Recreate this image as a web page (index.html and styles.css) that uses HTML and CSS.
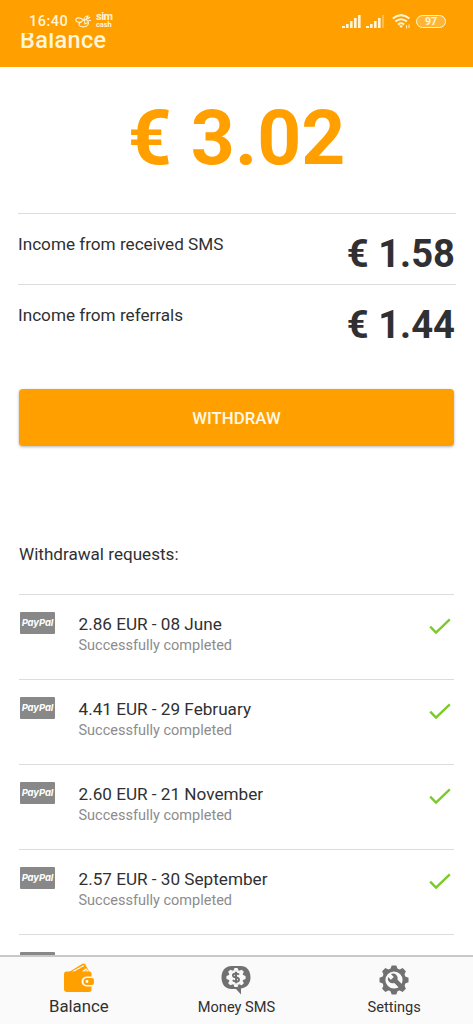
FILE: index.html
```html
<!DOCTYPE html>
<html lang="en">
<head>
<meta charset="utf-8">
<meta name="viewport" content="width=device-width">
<title>Balance</title>
<link rel="stylesheet" href="styles.css">
</head>
<body>
<svg class="defs" width="0" height="0">
  <defs>
    <symbol id="check" viewBox="0 0 22 18"><path d="M1.200 8.700l5.800 5.800L20.800 1.300" fill="none" stroke="#7acb27" stroke-width="2.400"/></symbol>
    <g id="teeth">
      <path id="tooth" d="M-3.800-10.500L-2.300-14.500H2.300L3.800-10.500z"/>
      <use href="#tooth" transform="rotate(45)"/><use href="#tooth" transform="rotate(90)"/><use href="#tooth" transform="rotate(135)"/><use href="#tooth" transform="rotate(180)"/><use href="#tooth" transform="rotate(225)"/><use href="#tooth" transform="rotate(270)"/><use href="#tooth" transform="rotate(315)"/>
    </g>
  </defs>
</svg>
<div class="app">
  <header class="header">
    <div class="status">
      <span class="time">16:40</span>
      <svg class="bee" width="16" height="13" viewBox="0 0 16 13" fill="none" stroke="#fff5d8" stroke-width="1.100"><path d="M8.500 5C6 2.500 1 2 .8 4.500S4 8 7 6.500M5.500 7.500C3 8 3.500 11 6 11.500c4 1 7.500-.5 7.500-3.500 0-2.500-2-3.500-3.500-3.300C8 5 6.500 6.500 5.500 7.500zM9 5c0-2.500 2-4 4-4-.5 1-1 2.500-2 3.500M9.500 5.500l.5 3.500 3-1.500M12.500 4l2.500-2M13.500 5.500H16"/></svg>
      <span class="simcash"><b>sim</b><i>cash</i></span>
      <span class="spacer"></span>
      <svg class="signal" width="19" height="13" viewBox="0 0 19 13" fill="#fff5d8"><path d="M0 11h3v2H0zM4 9h2.600v4H4zM8 6h2.600v7H8zM12 3h2.600v10H12zM16 0h2.600v13H16z"/></svg>
      <svg class="signal" width="19" height="13" viewBox="0 0 19 13" fill="#fff5d8"><path d="M0 11h3v2H0zM4 9h2.600v4H4zM8 6h2.600v7H8zM12 3h2.600v10H12z"/><path opacity=".35" d="M16 0h2v13h-2z"/></svg>
      <svg class="wifi" width="19" height="15" viewBox="0 0 19 15" fill="none" stroke="#fff5d8" stroke-width="2"><path d="M.8 4.500Q9.100-2.300 17.400 4.500M3.300 7.600q5.800-4.800 11.600 0M5.900 10.500q3.200-2.400 6.400 0"/><path d="M7 11.500h4.200L9.100 14z" fill="#fff5d8" stroke="none"/><path d="M14.600 11v3.500M17 10.500V14" stroke-width="1"/></svg>
      <span class="battery">97</span>
    </div>
    <div class="title-clip"><h1 class="title">Balance</h1></div>
  </header>
  <main class="content">
    <div class="total">€ 3.02</div>
    <section class="income">
      <div class="income-row"><span>Income from received SMS</span><strong>€ 1.58</strong></div>
      <div class="income-row"><span>Income from referrals</span><strong>€ 1.44</strong></div>
    </section>
    <button class="withdraw">WITHDRAW</button>
    <h2 class="subtitle">Withdrawal requests:</h2>
    <section class="requests">
      <div class="request"><span class="paypal">PayPal</span><div class="detail"><div class="amount">2.86 EUR - 08 June</div><div class="state">Successfully completed</div></div><svg class="check"><use href="#check"/></svg></div>
      <div class="request"><span class="paypal">PayPal</span><div class="detail"><div class="amount">4.41 EUR - 29 February</div><div class="state">Successfully completed</div></div><svg class="check"><use href="#check"/></svg></div>
      <div class="request"><span class="paypal">PayPal</span><div class="detail"><div class="amount">2.60 EUR - 21 November</div><div class="state">Successfully completed</div></div><svg class="check"><use href="#check"/></svg></div>
      <div class="request"><span class="paypal">PayPal</span><div class="detail"><div class="amount">2.57 EUR - 30 September</div><div class="state">Successfully completed</div></div><svg class="check"><use href="#check"/></svg></div>
      <div class="request last"><span class="paypal"></span></div>
    </section>
  </main>
  <nav class="tabs">
    <div class="tab active">
      <svg width="30" height="30" viewBox="0 0 30 30"><path d="M5 9L18.500.8q1.600-.9 2.600.5L25.500 9z" fill="#ffa000"/><path d="M8.500 8.700L20 2.500M19 8.200l3-2.200 2 2.200z" fill="none" stroke="#fafafa" stroke-width="1.100"/><path d="M2.500 8.500h23q2 0 2 2v16q0 2.500-2.500 2.500H3Q0 29 0 26V11q0-2.500 2.500-2.500z" fill="#ffa000"/><path d="M28 13.500h-5.500a5 5 0 0 0 0 10H28z" fill="#fafafa"/><path d="M23 15h5q1.900 0 1.900 2v3q0 2-1.900 2h-5a3.500 3.500 0 0 1 0-7z" fill="#ffa000"/><circle cx="23" cy="18.500" r="1.400" fill="#fafafa"/></svg>
      <span>Balance</span>
    </div>
    <div class="tab">
      <svg width="30" height="30" viewBox="0 0 30 30"><path d="M10.500 1h9C26 1 29.500 5.500 29.500 12.500c0 6-3.500 10-9.500 11V29.500l-5-5.500h-4.500C4 24 .5 19 .5 12.500S4 1 10.500 1z" fill="#717171"/><g transform="translate(15 12.500) scale(.66)" fill="#fafafa"><circle r="11.500"/><use href="#teeth"/></g><path d="M18 9.700q-1-1.200-3-1.200c-4 0-4 3.600 0 4s4 4 0 4q-2 0-3.200-1.400M15 6.800v11.400" fill="none" stroke="#717171" stroke-width="2"/></svg>
      <span>Money SMS</span>
    </div>
    <div class="tab">
      <svg width="30" height="30" viewBox="0 0 30 30"><g transform="translate(15 15)" fill="#717171"><circle r="11.800"/><use href="#teeth"/><circle r="8.600" fill="#fafafa"/><path d="M-2.500-6.200A4.800 4.800 0 0 1 3.600-.2L9.500 5.700 6.300 8.900.3 3A4.800 4.800 0 0 1-6-2.900L-3.100-.2-.2-3-2.900-5.800z"/></g></svg>
      <span>Settings</span>
    </div>
  </nav>
</div>
</body>
</html>
```
FILE: styles.css
```css
* { box-sizing: border-box; }
body { margin: 0; background: #fff; font-family: Roboto, sans-serif; color: #303032; }
.defs { position: absolute; }
.app { width: 473px; height: 1024px; display: flex; flex-direction: column; overflow: hidden; }
.header { height: 67px; flex: none; background: #ffa000; color: #fff5d8; }
.status { height: 33px; padding: 9px 27px 0 29px; display: flex; align-items: center; }
.time { font-size: 14.5px; font-weight: 500; letter-spacing: .5px; width: 46px; }
.simcash { display: flex; flex-direction: column; margin-left: 5px; margin-top: -2px; }
.simcash b { font-size: 11px; font-weight: 700; letter-spacing: -.5px; line-height: 8px; }
.simcash i { font-size: 7.5px; font-style: normal; font-weight: 700; line-height: 7px; letter-spacing: -.1px; }
.spacer { flex: 1; }
.signal { margin-right: 5px; }
.wifi { margin: 1px 5px 0 2px; }
.battery { width: 30px; height: 13px; border: 1.5px solid #fff5d8; border-radius: 7px; background: #ffb636; font-size: 10.5px; line-height: 11px; font-weight: 700; text-align: center; }
.title-clip { height: 34px; overflow: hidden; padding-left: 20px; }
.title { margin: -6px 0 0; font-size: 23.5px; line-height: 27px; font-weight: 500; letter-spacing: .35px; }
.content { flex: 1; min-height: 0; overflow: hidden; padding: 0 19px; }
.total { height: 146px; padding-top: 26px; text-align: center; color: #ffa000; font-size: 76.8px; line-height: 90px; font-weight: 700; }
.income { margin: 0 -2px 0 -1px; }
.income-row { height: 71px; border-top: 1px solid #dcdcdc; display: flex; justify-content: space-between; font-size: 17.15px; line-height: 20px; padding-top: 20px; }
.income-row strong { font-size: 38.2px; line-height: 41px; font-weight: 700; margin-right: 1px; }
.withdraw { display: block; width: 435px; height: 57px; margin: 34px 0 0; border: 0; border-radius: 4px; background: #ffa000; color: #fff8e6; font: 500 16.8px/57px Roboto, sans-serif; padding: 1px 0 0; box-shadow: 0 1px 3px rgba(0,0,0,.3); }
.subtitle { margin: 98px 0 0; height: 50px; font-size: 17.1px; line-height: 20px; font-weight: 400; }
.request { height: 85px; border-top: 1px solid #dcdcdc; display: flex; padding: 17px 3px 0 1px; }
.paypal { width: 35px; height: 22px; background: #888; color: #fff; font: italic 700 9.5px/21px Inter, sans-serif; letter-spacing: -.1px; text-align: center; border-radius: 1px; }
.detail { flex: 1; padding: 2px 0 0 23.5px; }
.amount { font-size: 17.15px; line-height: 20px; }
.state { font-size: 14.5px; line-height: 20px; margin-top: 2px; color: #8c8c8c; }
.check { width: 22px; height: 18px; margin-top: 6px; }
.tabs { height: 69px; flex: none; display: grid; grid-template-columns: repeat(3, 1fr); background: #fafafa; border-top: 2px solid #c8c8c8; }
.tab { display: flex; flex-direction: column; align-items: center; padding-top: 8px; font-size: 14.6px; line-height: 18px; gap: 3px; }
.tab svg { flex: none; }
.tab.active { padding-top: 6px; font-size: 16.8px; line-height: 20px; }
```
